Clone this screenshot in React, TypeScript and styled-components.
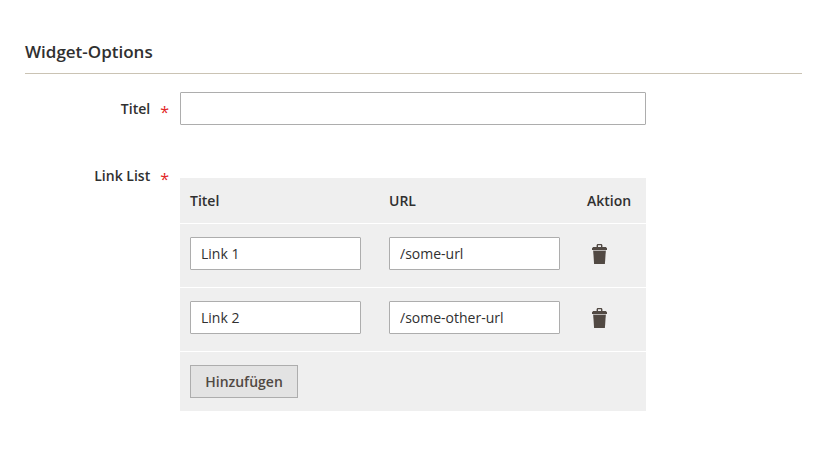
import React from "react";
import styled, { createGlobalStyle } from "styled-components";

const GlobalStyle = createGlobalStyle`
  *, *::before, *::after { box-sizing: border-box; }
  body {
    margin: 0;
    background: #fff;
    color: #303030;
    font-family: "Open Sans", "Helvetica Neue", Helvetica, Arial, sans-serif;
    font-size: 14px;
    line-height: 19px;
  }
`;

const Fieldset = styled.section`
  padding: 39px 20px 0 25px;
`;

const Legend = styled.h2`
  height: 35px;
  margin: 0 0 18px;
  border-bottom: 1px solid #cac3b4;
  font-size: 17px;
  font-weight: 600;
  line-height: 26px;
`;

const Field = styled.div<{ $gap?: number }>`
  display: grid;
  grid-template-columns: 155px 466px;
  align-items: start;
  margin-bottom: ${({ $gap = 0 }) => $gap}px;
`;

const Label = styled.label<{ $offset: number }>`
  display: flex;
  justify-content: flex-end;
  gap: 10px;
  margin-top: ${({ $offset }) => $offset}px;
  padding-right: 11px;
  font-weight: 600;
`;

const Required = styled.span`
  height: 19px;
  padding-top: 4px;
  color: #e22626;
  font-size: 16px;
  font-weight: 500;
`;

const TextInput = styled.input`
  display: block;
  width: 100%;
  height: 33px;
  margin: 0;
  padding: 0 10px;
  border: 1px solid #adadad;
  border-radius: 1px;
  background: #fff;
  color: #303030;
  font: inherit;
`;

const Table = styled.div`
  background: #efefef;
`;

const Row = styled.div`
  display: grid;
  grid-template-columns: 171px 171px 1fr;
  column-gap: 28px;
  height: 64px;
  padding: 13px 10px 0;
  border-bottom: 1px solid #fff;
`;

const HeaderRow = styled(Row)`
  height: 46px;
  font-weight: 600;
`;

const ActionTitle = styled.span`
  margin-left: -1px;
`;

const Footer = styled.div`
  height: 59px;
  padding: 13px 10px 0;
`;

const DeleteButton = styled.button`
  display: block;
  width: 16px;
  height: 20px;
  margin: 7px 0 0 4px;
  padding: 0;
  border: 0;
  background: none;
`;

const AddButton = styled.button`
  display: block;
  width: 108px;
  height: 33px;
  padding: 0;
  border: 1px solid #adadad;
  background: #e3e3e3;
  color: #514943;
  font: inherit;
  font-weight: 600;
`;

const TrashIcon = () => (
  <svg width="16" height="20" viewBox="0 0 16 20" fill="#514943" display="block">
    <path
      fillRule="evenodd"
      d="M5.4 0h4.2l.8 1v2h3.4l1.2 1.2V6H0V4.2L1.2 3h3.4V1zM6 1.2V3h3V1.2z"
    />
    <path d="M1.2 7h12.6l-.9 13H2.1z" />
    <path d="M1 6h13v1H1z" opacity="0.35" />
  </svg>
);

const links = [
  { title: "Link 1", url: "/some-url" },
  { title: "Link 2", url: "/some-other-url" },
];

export default function App() {
  return (
    <>
      <GlobalStyle />
      <Fieldset>
        <Legend>Widget-Options</Legend>
        <Field $gap={53}>
          <Label $offset={7} htmlFor="title">
            Titel <Required>*</Required>
          </Label>
          <TextInput id="title" type="text" />
        </Field>
        <Field>
          <Label as="div" $offset={-12}>
            Link List <Required>*</Required>
          </Label>
          <Table>
            <HeaderRow>
              <span>Titel</span>
              <span>URL</span>
              <ActionTitle>Aktion</ActionTitle>
            </HeaderRow>
            {links.map((link) => (
              <Row key={link.url}>
                <TextInput type="text" defaultValue={link.title} />
                <TextInput type="text" defaultValue={link.url} />
                <DeleteButton type="button" aria-label="Löschen">
                  <TrashIcon />
                </DeleteButton>
              </Row>
            ))}
            <Footer>
              <AddButton type="button">Hinzufügen</AddButton>
            </Footer>
          </Table>
        </Field>
      </Fieldset>
    </>
  );
}
